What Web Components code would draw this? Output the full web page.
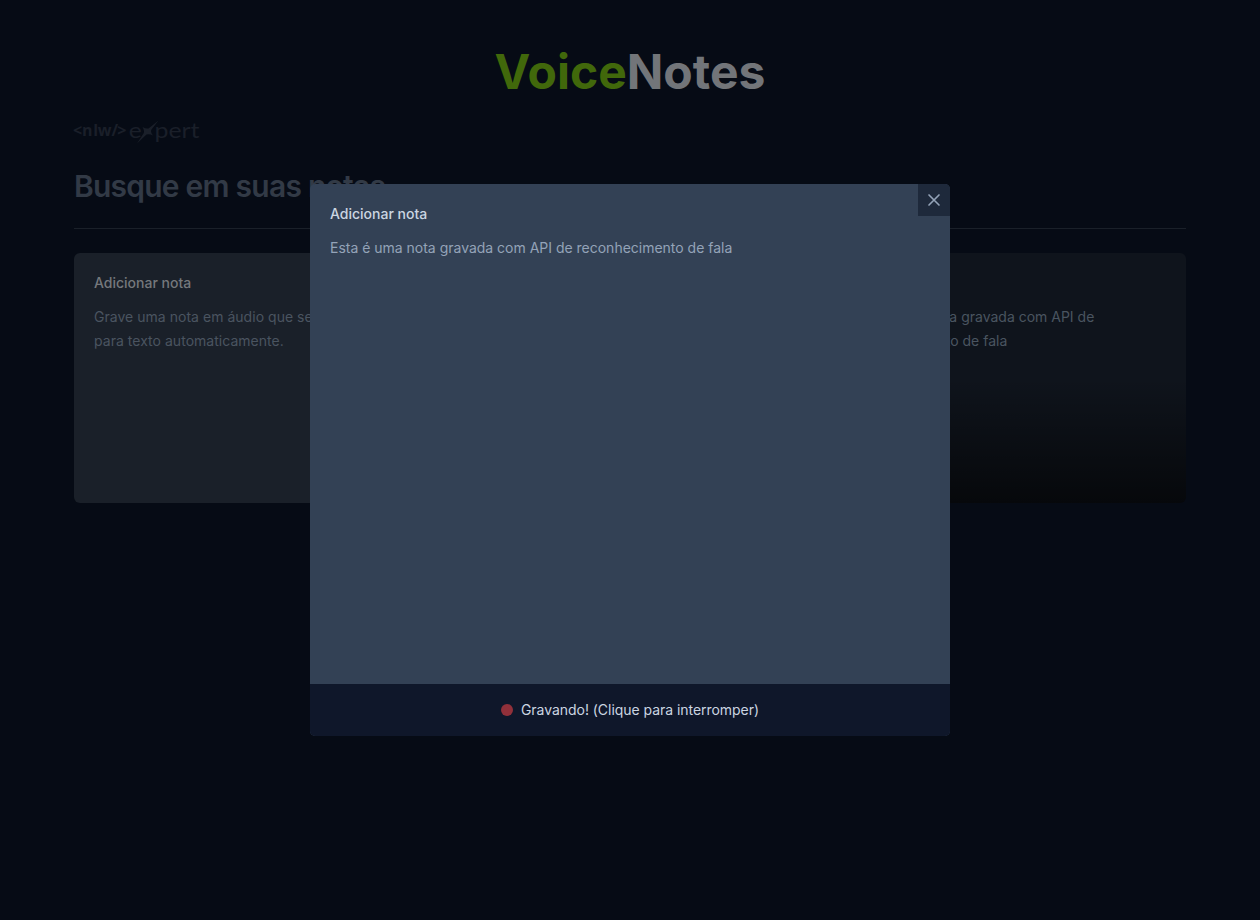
<!DOCTYPE html>
<html lang="pt-BR">
<head>
<meta charset="utf-8">
<title>VoiceNotes</title>
<style>
html,body{margin:0;height:100%;overflow:hidden}
body{background:#060b15;font-family:Inter,sans-serif;font-size:14px;color:#f8fafc}
</style>
</head>
<body>
<voice-notes-app></voice-notes-app>
<script>
const define = (name, html) => {
  const template = document.createElement('template');
  template.innerHTML = html;
  customElements.define(name, class extends HTMLElement {
    constructor() {
      super();
      this.attachShadow({ mode: 'open' }).append(template.content.cloneNode(true));
    }
  });
};

define('app-title', `
<style>
:host{display:block;text-align:center;height:48px}
h1{margin:0;font-size:48px;line-height:48px;font-weight:700;color:#727579}
span{color:#41680b}
</style>
<h1><span>Voice</span>Notes</h1>`);

define('nlw-logo', `
<style>
:host{display:block;height:24px}
svg{display:block;overflow:visible;fill:#1a1f29}
text{font-family:Lato,sans-serif}
.tag{font-family:"Open Sans",sans-serif;font-weight:700}
</style>
<svg width="127" height="24" viewBox="0 0 127 24">
  <text class="tag" x="-1 8 19.200 23.800 37.500 43.200" y="16" font-size="16">&lt;nlw/&gt;</text>
  <text x="54.700" y="17.500" font-size="22" textLength="13" lengthAdjust="spacingAndGlyphs">e</text>
  <path d="M84.500 .5 77.500 9.500Q76 11.500 79 15.500 75.500 13.500 72.500 14.500L63 23.500 69.500 13.500Q71 11.500 68.500 7 72 9 74.500 8.500Z"/>
  <text x="80.500" y="17.500" font-size="22" textLength="45" lengthAdjust="spacingAndGlyphs">pert</text>
</svg>`);

define('search-field', `
<style>
:host{display:block;height:36px;font-size:30px;line-height:36px;font-weight:600;letter-spacing:-.77px;color:#323a46}
</style>
<slot></slot>`);

define('note-card', `
<style>
:host{display:flex;flex-direction:column;gap:12px;box-sizing:border-box;padding:20px;border-radius:6px;overflow:hidden;line-height:24px;color:#4a5460;background:#0f141c}
:host([action]){background:#1a2029}
:host([note]){background:linear-gradient(to bottom,transparent 50%,rgba(0,0,0,.6)),#0f141c}
header{font-size:14px;line-height:20px;height:20px;font-weight:500;color:#75787c}
p{margin:0;font-size:14px;line-height:24px}
:host([action]) p{letter-spacing:.03px}
</style>
<header><slot name="title"></slot></header>
<p><slot></slot></p>`);

define('close-button', `
<style>
:host{position:absolute;top:0;right:0;width:32px;height:32px;display:grid;place-items:center;background:#1e293b}
svg{display:block;fill:none;stroke:#94a3b8;stroke-width:2;stroke-linecap:round}
</style>
<svg width="20" height="20" viewBox="0 0 24 24"><path d="M18 6 6 18M6 6l12 12"/></svg>`);

define('record-button', `
<style>
:host{display:flex;align-items:center;justify-content:center;gap:8px;height:52px;background:#0f172a;color:#cbd5e1;font-weight:400;font-size:14px;line-height:20px;letter-spacing:-.04px}
i{width:12px;height:12px;border-radius:50%;background:#91303a}
</style>
<i></i><span><slot></slot></span>`);

define('note-dialog', `
<style>
:host{position:absolute;left:50%;top:50%;transform:translate(-50%,-50%);width:640px;height:552px;display:flex;flex-direction:column;background:#334155;border-radius:5px;overflow:hidden}
main{flex:1;display:flex;flex-direction:column;gap:12px;padding:20px}
h2{margin:0;font-size:14px;line-height:20px;font-weight:500;color:#cbd5e1}
p{margin:0;font-size:14px;line-height:24px;letter-spacing:-.01px;color:#94a3b8}
</style>
<close-button></close-button>
<main><h2><slot name="title"></slot></h2><p><slot></slot></p></main>
<record-button>Gravando! (Clique para interromper)</record-button>`);

define('voice-notes-app', `
<style>
:host{display:block;position:relative;box-sizing:border-box;height:920px;padding:48px 74px}
.page{display:flex;flex-direction:column;gap:24px}
hr{border:0;height:1px;margin:0;background:#1a2029}
.notes{display:grid;grid-template-columns:repeat(3,1fr);grid-auto-rows:250px;gap:24px}
</style>
<div class="page">
  <app-title></app-title>
  <nlw-logo></nlw-logo>
  <search-field>Busque em suas notas...</search-field>
  <hr>
  <div class="notes">
    <note-card action><span slot="title">Adicionar nota</span>Grave uma nota em áudio que será convertida para texto automaticamente.</note-card>
    <note-card note></note-card>
    <note-card note>Esta é uma nota gravada com API de reconhecimento de fala</note-card>
  </div>
</div>
<note-dialog><span slot="title">Adicionar nota</span>Esta é uma nota gravada com API de reconhecimento de fala</note-dialog>`);
</script>
</body>
</html>
